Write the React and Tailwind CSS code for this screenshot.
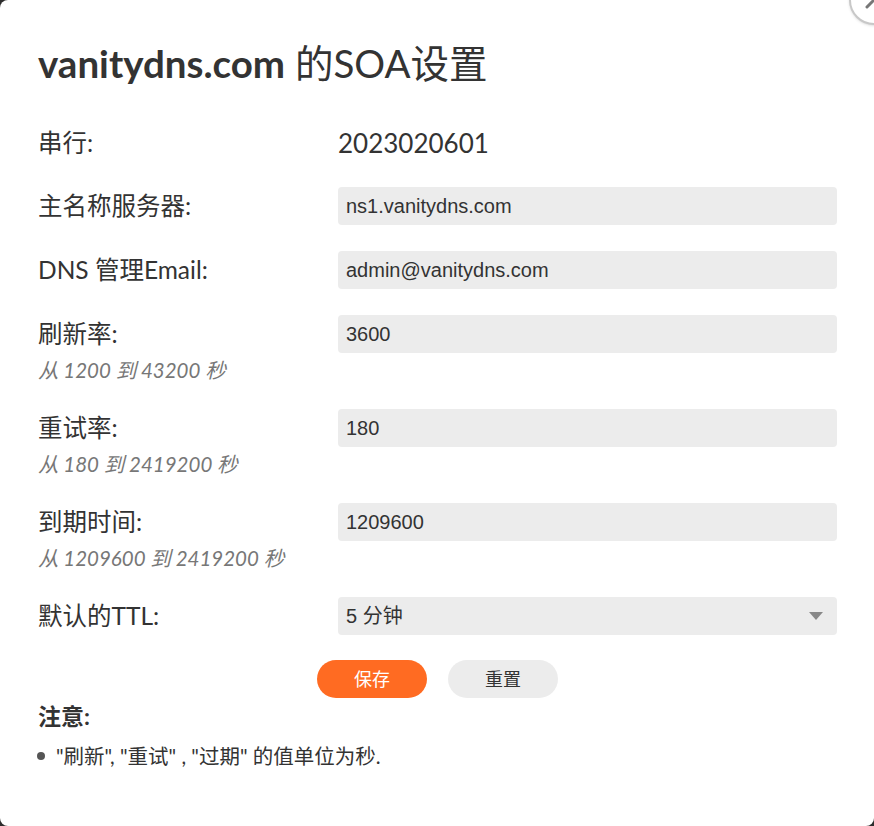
import React from 'react'

const cjk = "font-['Lato','Noto_Sans_CJK_SC',sans-serif]"
const arial = "font-['Liberation_Sans','Noto_Sans_CJK_SC',sans-serif]"

function Field({ label, hint, children }) {
  return (
    <div className="flex items-start">
      <div className="w-[300px] shrink-0">
        <div className={`h-[38px] flex items-center text-[24.5px] text-[#333] ${cjk}`}>{label}</div>
        {hint ? (
          <div className={`mt-[4px] text-[20.5px] leading-[26px] italic text-[#777] ${cjk}`}>{hint}</div>
        ) : null}
      </div>
      <div className="flex-1">{children}</div>
    </div>
  )
}

function TextBox({ value }) {
  return (
    <div className={`h-[38px] rounded bg-[#ececec] px-[8px] flex items-center text-[20px] text-[#333] ${arial}`}>
      {value}
    </div>
  )
}

export default function App() {
  return (
    <div className="h-[826px] w-full bg-[#2d2d2d] overflow-hidden">
      <div className="relative h-full bg-white rounded-lg pl-[38px] pr-[37px]">
        {/* close button, mostly off-canvas */}
        <div className="absolute -top-[25px] -right-[25px] w-[50px] h-[50px] rounded-full bg-white border-2 border-[#c8c8c8] shadow flex items-center justify-center">
          <svg width="22" height="22" viewBox="0 0 22 22">
            <path d="M4 4 L18 18 M18 4 L4 18" stroke="#777" strokeWidth="3" strokeLinecap="round" />
          </svg>
        </div>

        <h1 className={`pt-[40px] h-[86px] leading-[46px] text-[38.5px] text-[#333] ${cjk}`}>
          <span className="font-bold">vanitydns.com</span> 的SOA设置
        </h1>

        <div className="mt-[38px] flex flex-col gap-[26px]">
          <div className="-mb-[1px]">
            <Field label="串行:">
              <div className={`h-[38px] flex items-center text-[26px] text-[#333] ${cjk}`}>2023020601</div>
            </Field>
          </div>
          <Field label="主名称服务器:">
            <TextBox value="ns1.vanitydns.com" />
          </Field>
          <Field label="DNS 管理Email:">
            <TextBox value="admin@vanitydns.com" />
          </Field>
          <Field label="刷新率:" hint="从 1200 到 43200 秒">
            <TextBox value="3600" />
          </Field>
          <Field label="重试率:" hint="从 180 到 2419200 秒">
            <TextBox value="180" />
          </Field>
          <Field label="到期时间:" hint="从 1209600 到 2419200 秒">
            <TextBox value="1209600" />
          </Field>
          <Field label="默认的TTL:">
            <div className={`h-[38px] rounded bg-[#ececec] pl-[8px] pr-[14px] flex items-center justify-between text-[20px] text-[#333] ${arial}`}>
              <span>5 分钟</span>
              <svg width="14" height="8" viewBox="0 0 14 8">
                <path d="M0 0 L14 0 L7 8 Z" fill="#888" />
              </svg>
            </div>
          </Field>
        </div>

        <div className={`mt-[25px] flex justify-center gap-[21px] ${cjk}`}>
          <button className="w-[110px] h-[38px] rounded-full bg-[#ff6b22] text-white text-[18px]">保存</button>
          <button className="w-[110px] h-[38px] rounded-full bg-[#ececec] text-[#333] text-[18px]">重置</button>
        </div>

        <div className={`mt-[3px] text-[23px] leading-[30px] font-bold text-[#333] ${cjk}`}>注意:</div>
        <ul className={`mt-[12px] text-[20.5px] leading-[26px] text-[#333] ${cjk}`}>
          <li className="flex items-center">
            <span className="w-[8px] h-[8px] rounded-full bg-[#555] -ml-[1px] mr-[11px]"></span>
            "刷新", "重试" , "过期" 的值单位为秒.
          </li>
        </ul>
      </div>
    </div>
  )
}
